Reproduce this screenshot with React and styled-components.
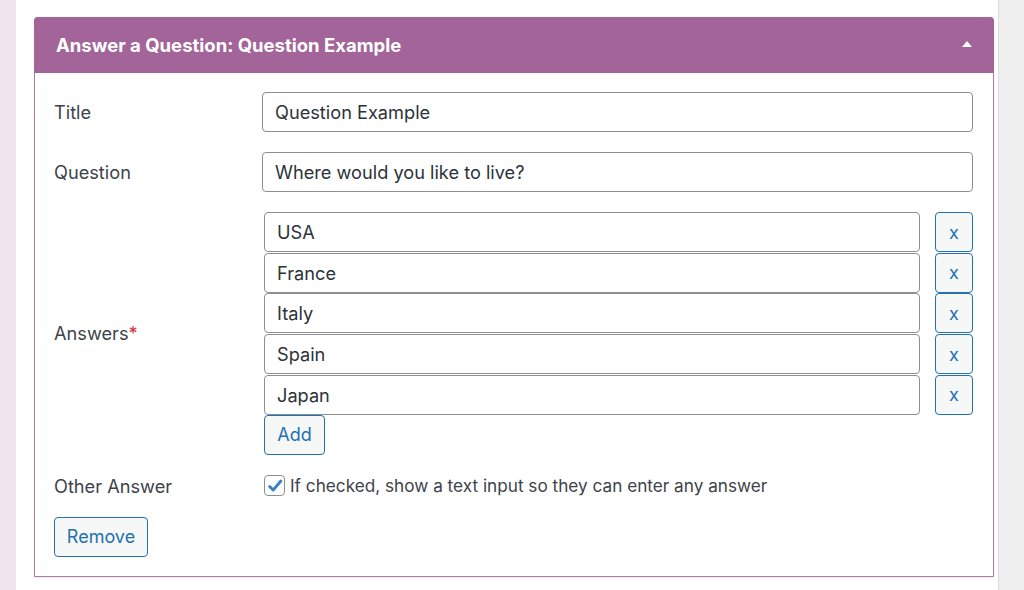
import React, { useState } from "react";
import styled, { createGlobalStyle } from "styled-components";

const GlobalStyle = createGlobalStyle`
  html, body {
    margin: 0;
    padding: 0;
    background: #ffffff;
    font-family: Inter, "Noto Sans", "Liberation Sans", sans-serif;
    color: #3c434a;
  }
  * { box-sizing: border-box; }
`;

const Page = styled.div`
  display: flex;
  width: 1024px;
  height: 590px;
  overflow: hidden;
`;

const LeftStrip = styled.div`
  width: 16px;
  flex-shrink: 0;
  background: #f0e4ee;
`;

const Main = styled.main`
  flex: 1;
  padding: 17px 4px 0 18px;
  background: #fff;
`;

const RightStrip = styled.div`
  width: 26px;
  flex-shrink: 0;
  background: #f0f0f1;
  border-left: 1px solid #dcdcde;
`;

const Card = styled.section`
  width: 960px;
  border: 1px solid #b07aa8;
  border-radius: 4px 4px 0 0;
  box-shadow: 0 1px 2px rgba(0, 0, 0, 0.08);
  background: #fff;
`;

const Header = styled.header`
  display: flex;
  align-items: center;
  justify-content: space-between;
  height: 56px;
  margin: -1px -1px 0;
  padding: 0 22px 0 22px;
  background: #a3649a;
  border-radius: 4px 4px 0 0;
  color: #fff;
  font-size: 18.5px;
  font-weight: 700;
`;

const Caret = styled.span`
  width: 0;
  height: 0;
  border-left: 5px solid transparent;
  border-right: 5px solid transparent;
  border-bottom: 6px solid #fff;
  margin-top: -2px;
`;

const Body = styled.div`
  padding: 19px 20px 19px 19px;
  display: flex;
  flex-direction: column;
  gap: 20px;
`;

const Row = styled.div`
  display: grid;
  grid-template-columns: 208px 1fr;
  align-items: center;
`;

const Label = styled.label`
  font-size: 18.2px;
  line-height: 22px;
  color: #3c434a;
`;

const Required = styled.span`
  color: #d63638;
`;

const TextInput = styled.input`
  width: 100%;
  height: 40px;
  padding: 0 12px;
  border: 1px solid #8c8f94;
  border-radius: 4px;
  font-family: inherit;
  font-size: 18.2px;
  color: #2c3338;
  background: #fff;
  outline: none;
`;

const AnswerList = styled.div`
  display: flex;
  flex-direction: column;
  padding-left: 2px;
`;

const AnswerRow = styled.div`
  display: flex;
  align-items: center;
  gap: 15px;
  height: 40.6px;
`;

const Button = styled.button`
  display: block;
  height: 40px;
  width: ${(p) => p.$w}px;
  padding: 0;
  border: 1px solid #2271b1;
  border-radius: 4px;
  background: #f6f7f7;
  color: #2271b1;
  font-family: inherit;
  font-size: 18px;
  cursor: pointer;
  flex-shrink: 0;
`;

const CheckLabel = styled.label`
  display: flex;
  align-items: center;
  gap: 5px;
  padding-left: 2px;
  font-size: 17.2px;
  line-height: 22px;
  color: #3c434a;
`;

const CheckBox = styled.span`
  width: 21px;
  height: 21px;
  border: 1px solid #8c8f94;
  border-radius: 4px;
  background: #fff;
  display: flex;
  align-items: center;
  justify-content: center;
`;

const Footer = styled.div`
  display: flex;
`;

export default function App() {
  const [answers, setAnswers] = useState(["USA", "France", "Italy", "Spain", "Japan"]);
  const [other, setOther] = useState(true);

  return (
    <>
      <GlobalStyle />
      <Page>
        <LeftStrip />
        <Main>
          <Card>
            <Header>
              <span>Answer a Question: Question Example</span>
              <Caret />
            </Header>
            <Body>
              <Row>
                <Label>Title</Label>
                <TextInput defaultValue="Question Example" />
              </Row>
              <Row>
                <Label>Question</Label>
                <TextInput defaultValue="Where would you like to live?" />
              </Row>
              <Row>
                <Label>
                  Answers<Required>*</Required>
                </Label>
                <AnswerList>
                  {answers.map((a, i) => (
                    <AnswerRow key={i}>
                      <TextInput defaultValue={a} />
                      <Button $w={38}
                        onClick={() => setAnswers(answers.filter((_, j) => j !== i))}>
                        x
                      </Button>
                    </AnswerRow>
                  ))}
                  <Button $w={61} onClick={() => setAnswers([...answers, ""])}>Add</Button>
                </AnswerList>
              </Row>
              <Row>
                <Label>Other Answer</Label>
                <CheckLabel onClick={() => setOther(!other)}>
                  <CheckBox>
                    {other && (
                      <svg width="18" height="18" viewBox="0 0 20 20">
                        <path d="M4 10.5l4 4L16.5 4.5" fill="none" stroke="#3582c4" strokeWidth="3.2" strokeLinecap="round" strokeLinejoin="round" />
                      </svg>
                    )}
                  </CheckBox>
                  If checked, show a text input so they can enter any answer
                </CheckLabel>
              </Row>
              <Footer>
                <Button $w={94}>Remove</Button>
              </Footer>
            </Body>
          </Card>
        </Main>
        <RightStrip />
      </Page>
    </>
  );
}
